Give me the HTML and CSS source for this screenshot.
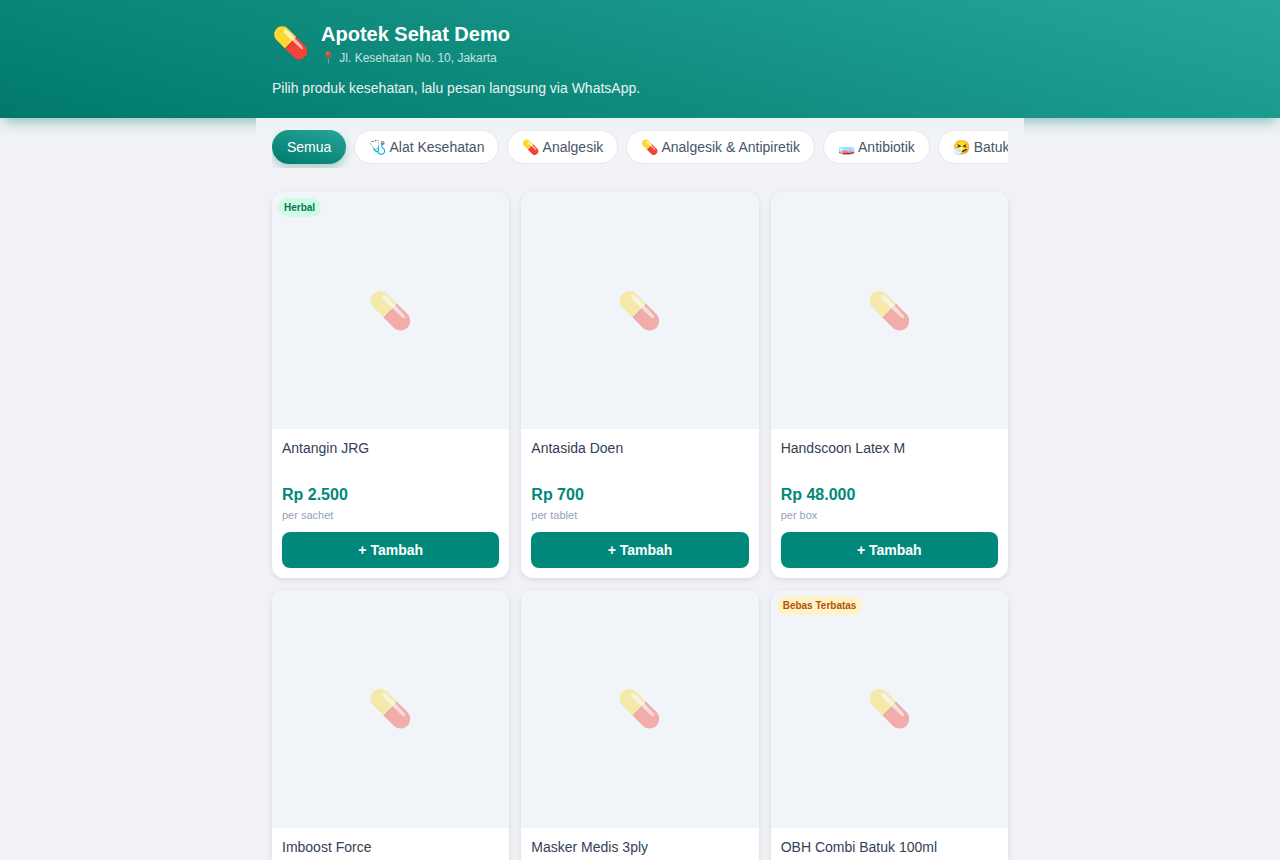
FILE: index.html
```html
<!DOCTYPE html>
<html lang="id">
<head>
  <meta charset="UTF-8">
  <meta name="viewport" content="width=device-width, initial-scale=1">
  <title>Apotek Sehat Demo</title>
  <link rel="stylesheet" href="styles.css">
</head>
<body>
  <header class="header">
    <div class="header-inner">
      <div class="brand">
        <div class="logo">💊</div>
        <div>
          <h1>Apotek Sehat Demo</h1>
          <p class="address">📍 Jl. Kesehatan No. 10, Jakarta</p>
        </div>
      </div>
      <p class="tagline">Pilih produk kesehatan, lalu pesan langsung via WhatsApp.</p>
    </div>
  </header>

  <nav class="categories">
    <div class="category-list">
      <button class="chip active">Semua</button>
      <button class="chip">🩺 Alat Kesehatan</button>
      <button class="chip">💊 Analgesik</button>
      <button class="chip">💊 Analgesik &amp; Antipiretik</button>
      <button class="chip">🧫 Antibiotik</button>
      <button class="chip">🤧 Batuk</button>
    </div>
  </nav>

  <main class="products">
    <article class="card">
      <div class="photo"><span class="badge herbal">Herbal</span><span class="placeholder">💊</span></div>
      <div class="info">
        <h2 class="name">Antangin JRG</h2>
        <div class="price">Rp 2.500</div>
        <div class="unit">per sachet</div>
        <button class="btn-add">+ Tambah</button>
      </div>
    </article>
    <article class="card">
      <div class="photo"><span class="placeholder">💊</span></div>
      <div class="info">
        <h2 class="name">Antasida Doen</h2>
        <div class="price">Rp 700</div>
        <div class="unit">per tablet</div>
        <button class="btn-add">+ Tambah</button>
      </div>
    </article>
    <article class="card">
      <div class="photo"><span class="placeholder">💊</span></div>
      <div class="info">
        <h2 class="name">Handscoon Latex M</h2>
        <div class="price">Rp 48.000</div>
        <div class="unit">per box</div>
        <button class="btn-add">+ Tambah</button>
      </div>
    </article>
    <article class="card">
      <div class="photo"><span class="placeholder">💊</span></div>
      <div class="info">
        <h2 class="name">Imboost Force</h2>
      </div>
    </article>
    <article class="card">
      <div class="photo"><span class="placeholder">💊</span></div>
      <div class="info">
        <h2 class="name">Masker Medis 3ply</h2>
      </div>
    </article>
    <article class="card">
      <div class="photo"><span class="badge limited">Bebas Terbatas</span><span class="placeholder">💊</span></div>
      <div class="info">
        <h2 class="name">OBH Combi Batuk 100ml</h2>
      </div>
    </article>
  </main>
</body>
</html>
```
FILE: styles.css
```css
* {
  box-sizing: border-box;
  margin: 0;
  padding: 0;
}

body {
  background: #f0f2f5;
  color: #1f2937;
  font-family: "Liberation Sans", Arial, sans-serif;
  font-size: 14px;
  line-height: 20px;
}

button {
  font-family: inherit;
  cursor: pointer;
}

/* header */
.header {
  background: linear-gradient(15deg, #00796b, #26a69a);
  color: #fff;
  box-shadow: 0 8px 12px -4px rgba(0,121,107,0.4);
}

.header-inner {
  max-width: 768px;
  margin: 0 auto;
  padding: 20px 16px;
}

.brand {
  display: flex;
  align-items: flex-start;
  gap: 12px;
  margin-bottom: 10px;
}

.logo {
  font-size: 30px;
  line-height: 46px;
}

h1 {
  font-size: 20px;
  line-height: 28px;
}

.address {
  font-size: 12px;
  line-height: 20px;
  opacity: 0.75;
}

.tagline {
  opacity: 0.9;
}

/* categories */
.categories {
  position: sticky;
  top: 0;
  z-index: 10;
  max-width: 768px;
  margin: 0 auto;
  padding: 12px 16px;
  background: rgba(240,242,245,0.95);
}

.category-list {
  display: flex;
  gap: 8px;
  padding-bottom: 4px;
  overflow-x: auto;
  scrollbar-width: none;
}

.chip {
  flex-shrink: 0;
  height: 34px;
  padding: 0 14px;
  border: 1px solid #e2e8f0;
  border-radius: 17px;
  background: #fff;
  color: #475569;
  font-size: 14px;
}

.chip.active {
  border-color: transparent;
  background: linear-gradient(15deg, #00796b, #26a69a) border-box;
  color: #fff;
  box-shadow: 0 4px 8px rgba(0,121,107,0.3);
}

/* products */
.products {
  display: grid;
  grid-template-columns: repeat(3, 1fr);
  gap: 12px;
  max-width: 768px;
  margin: 0 auto;
  padding: 12px 16px;
}

.card {
  background: #fff;
  border-radius: 12px;
  box-shadow: 0 2px 6px rgba(0,0,0,0.1);
  overflow: hidden;
}

.photo {
  position: relative;
  display: flex;
  align-items: center;
  justify-content: center;
  aspect-ratio: 1;
  background: #f1f5f9;
}

.placeholder {
  font-size: 36px;
  line-height: 40px;
  opacity: 0.4;
}

.badge {
  position: absolute;
  top: 6px;
  left: 6px;
  padding: 2px 6px;
  border-radius: 10px;
  font-size: 10px;
  font-weight: bold;
  line-height: 15px;
}

.herbal {
  background: #d1fae5;
  color: #047857;
}

.limited {
  background: #fef3c7;
  color: #b45309;
}

.info {
  padding: 10px;
}

.name {
  min-height: 40px;
  margin-bottom: 4px;
  color: #334155;
  font-size: 14px;
  font-weight: normal;
  line-height: 18px;
}

.price {
  color: #00897b;
  font-size: 16px;
  font-weight: bold;
  line-height: 24px;
}

.unit {
  margin-bottom: 9px;
  color: #94a3b8;
  font-size: 11px;
  line-height: 16px;
}

.btn-add {
  display: block;
  width: 100%;
  height: 36px;
  border: none;
  border-radius: 8px;
  background: #00897b;
  color: #fff;
  font-size: 14px;
  font-weight: bold;
}
```
